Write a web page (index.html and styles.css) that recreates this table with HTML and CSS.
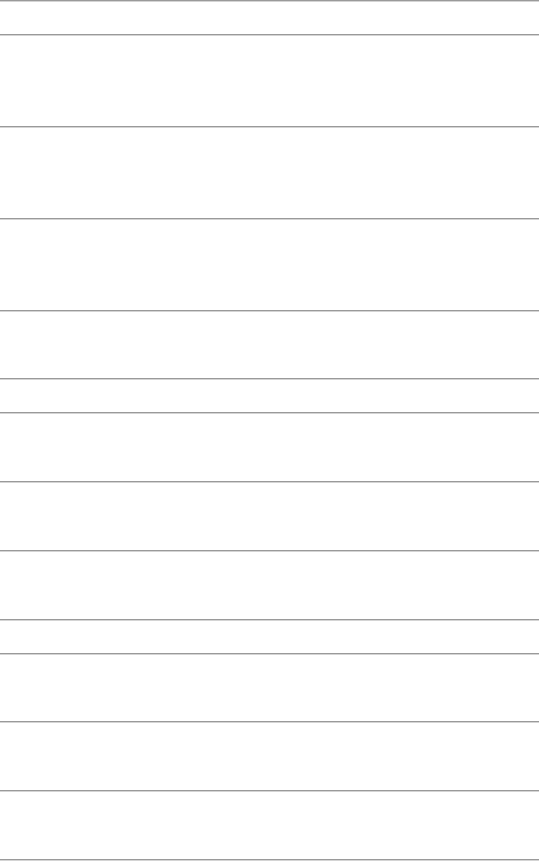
FILE: index.html
```html
<!DOCTYPE html>
<html lang="en">
<head>
<meta charset="utf-8">
<title>Sections</title>
<link rel="stylesheet" href="styles.css">
</head>
<body>
<main class="page">
  <hr class="rule">
  <div class="gap gap-sm"></div>
  <hr class="rule">
  <div class="gap gap-lg"></div>
  <hr class="rule">
  <div class="gap gap-lg"></div>
  <hr class="rule">
  <div class="gap gap-lg"></div>
  <hr class="rule">
  <div class="gap gap-md-a"></div>
  <hr class="rule">
  <div class="gap gap-sm"></div>
  <hr class="rule">
  <div class="gap gap-md"></div>
  <hr class="rule">
  <div class="gap gap-md"></div>
  <hr class="rule">
  <div class="gap gap-md"></div>
  <hr class="rule">
  <div class="gap gap-sm"></div>
  <hr class="rule">
  <div class="gap gap-md-a"></div>
  <hr class="rule">
  <div class="gap gap-md"></div>
  <hr class="rule">
  <div class="gap gap-md"></div>
  <hr class="rule">
</main>
</body>
</html>
```
FILE: styles.css
```css
html, body {
  margin: 0;
  padding: 0;
  background: #ffffff;
  font-family: "Liberation Sans", Arial, sans-serif;
}

.page {
  display: flex;
  flex-direction: column;
  width: 540px;
}

.rule {
  margin: 0;
  height: 0;
  width: 539px;
  border: 0;
  border-top: 1px solid #9a9a9a;
  border-bottom: 1px solid #d4d4d4;
}

.gap {
  flex: none;
}

.gap-sm { height: 32px; }
.gap-lg { height: 90px; }
.gap-md { height: 67px; }
.gap-md-a { height: 66px; }
```
